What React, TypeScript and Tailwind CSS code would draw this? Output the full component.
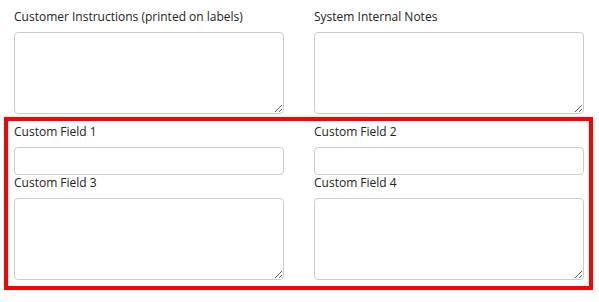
import React from "react";

function Field({ label, kind, h, labelClass }: { label: string; kind: "textarea" | "input"; h: string; labelClass: string }) {
  return (
    <div className="flex flex-col w-[270px]">
      <label className={labelClass}>{label}</label>
      {kind === "textarea" ? (
        <textarea className={`block w-full ${h} border border-[#cccccc] rounded-[4px] bg-white resize`} />
      ) : (
        <input className={`block w-full ${h} border border-[#cccccc] rounded-[4px] bg-white`} />
      )}
    </div>
  );
}

export default function App() {
  return (
    <div
      className="w-[599px] h-[302px] bg-white text-[#222222] text-[12px] overflow-hidden"
      style={{ fontFamily: '"Open Sans", sans-serif' }}
    >
      <div className="flex gap-[30px] pl-[14px]">
        <Field label="Customer Instructions (printed on labels)" kind="textarea" h="h-[82px]" labelClass="block pt-[8px] leading-[18px] mb-[6px]" />
        <Field label="System Internal Notes" kind="textarea" h="h-[82px]" labelClass="block pt-[8px] leading-[18px] mb-[6px]" />
      </div>
      <div className="mt-[3px] ml-[4px] w-[589px] h-[173px] border-4 border-[#ff0000] pl-[6px] pt-[2px]">
        <div className="flex gap-[30px]">
          <Field label="Custom Field 1" kind="input" h="h-[28px]" labelClass="block leading-[18px] mb-[6px]" />
          <Field label="Custom Field 2" kind="input" h="h-[28px]" labelClass="block leading-[18px] mb-[6px]" />
        </div>
        <div className="flex gap-[30px]">
          <Field label="Custom Field 3" kind="textarea" h="h-[82px]" labelClass="block leading-[16px] mb-[7px]" />
          <Field label="Custom Field 4" kind="textarea" h="h-[82px]" labelClass="block leading-[16px] mb-[7px]" />
        </div>
      </div>
    </div>
  );
}
